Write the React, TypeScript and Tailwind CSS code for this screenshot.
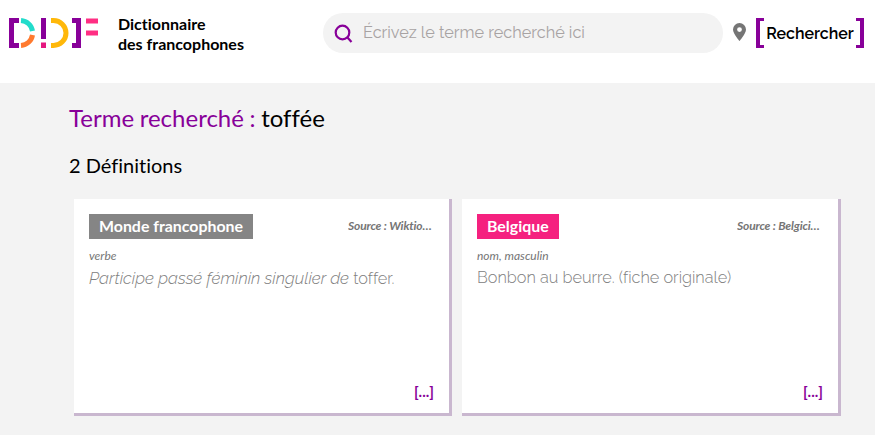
function Logo() {
  return (
    <svg width="90" height="32" viewBox="0 0 90 32" fill="none">
      <path d="M10 3.5H2.5V28.5H10" stroke="#880099" strokeWidth="5" />
      <path d="M12 3.5a12.5 12.5 0 0 1 11.5 10.5" stroke="#22dccb" strokeWidth="5" />
      <path d="M23.5 18a12.5 12.5 0 0 1-11.5 10.5" stroke="#ff7a2f" strokeWidth="5" />
      <rect x="32" y="1" width="5" height="21" fill="#880099" />
      <rect x="32" y="25.5" width="5" height="5.5" fill="#e5177f" />
      <path d="M42 3.5h2.5a12.5 12.5 0 0 1 0 25h-2.5" stroke="#ffb80a" strokeWidth="5" />
      <path d="M63 3.5H69.5V28.5H63" stroke="#880099" strokeWidth="5" />
      <path d="M77 4H89M77 16H89" stroke="#ff2e83" strokeWidth="5" />
    </svg>
  )
}

function Card({ badge, badgeColor, source, children, pos, width }: { badge: string; badgeColor: string; source: string; pos: string; width: string; children: React.ReactNode }) {
  return (
    <div className={`${width} h-[217px] bg-white border-r-[3px] border-b-[3px] border-[#c9b7cf] px-[15px] pt-[15px] flex flex-col`}>
      <div className="flex items-center justify-between">
        <span className={`${badgeColor} text-white font-bold text-[15.9px] leading-[23px] h-[25px] px-[10px]`}>{badge}</span>
        <span className="text-[#757575] italic font-bold text-[12px] tracking-[-0.15px] leading-[14px] mb-[1px] mr-[1px] w-[85px] truncate">{source}</span>
      </div>
      <div className="text-[#757575] italic text-[12px] leading-[14px] mt-[10px]">{pos}</div>
      <p className="font-['Raleway','Open_Sans',sans-serif] text-[#808080] text-[16.3px] leading-[22px] mt-[4px] font-light">{children}</p>
      <div className="mt-auto mb-[13px] text-right text-[#880099] font-bold text-[15px] leading-[18px]">[...]</div>
    </div>
  )
}

export default function App() {
  return (
    <div className="w-[875px] h-[435px] overflow-hidden bg-[#f3f3f3] font-['Lato',sans-serif] [font-variant-ligatures:none]">
      <header className="h-[83px] bg-white flex items-start pl-[9px]">
        <div className="mt-[17px] w-[90px]"><Logo /></div>
        <div className="ml-[19px] mt-[14px] text-black font-bold text-[16px] leading-[20px] w-[126px] whitespace-nowrap">
          Dictionnaire<br />des francophones
        </div>
        <div className="ml-[79px] mt-[13px] w-[400px] h-[40px] rounded-full bg-[#f3f3f3] flex items-center pl-[11px] gap-[10px]">
          <svg width="19" height="19" viewBox="0 0 19 19" fill="none" stroke="#880099" strokeWidth="2.2">
            <circle cx="8.5" cy="8.5" r="6.8" />
            <path d="M13.5 13.5L17.5 18" />
          </svg>
          <span className="font-['Raleway','Open_Sans',sans-serif] text-[#a8a3a3] text-[16.3px]">Écrivez le terme recherché ici</span>
        </div>
        <svg className="ml-[10px] mt-[23px]" width="13" height="18" viewBox="0 0 13 18">
          <path fillRule="evenodd" fill="#757575" d="M6.5 0A6.5 6.5 0 0 0 0 6.5C0 10.5 6.5 18 6.5 18S13 10.5 13 6.5A6.5 6.5 0 0 0 6.5 0ZM6.5 4.2a2.4 2.4 0 1 1 0 4.8 2.4 2.4 0 0 1 0-4.8Z" />
        </svg>
        <div className="ml-[10px] mt-[18px] h-[30px] w-[108px] pt-[1px] flex items-center justify-center relative font-['Raleway','Open_Sans',sans-serif] text-black font-semibold text-[16px] whitespace-nowrap">
          <span className="absolute left-0 inset-y-0 w-[8px] border-l-[4px] border-y-[3px] border-[#880099]" />
          <span className="absolute right-0 inset-y-0 w-[8px] border-r-[4px] border-y-[3px] border-[#880099]" />
          Rechercher
        </div>
      </header>
      <main className="pl-[69px]">
        <h1 className="mt-[19px] text-[24px] leading-[32px] text-[#880099] [word-spacing:-0.5px]">
          Terme recherché : <span className="text-black">toffée</span>
        </h1>
        <h2 className="mt-[18px] text-[20px] leading-[26px] text-black">2 Définitions</h2>
        <div className="flex gap-[10px] mt-[21px] ml-[5px]">
          <Card width="w-[378px]" badge="Monde francophone" badgeColor="bg-[#858585]" source="Source : Wiktionnaire" pos="verbe">
            <i className="text-[16.8px]">Participe passé féminin singulier de</i> toffer.
          </Card>
          <Card width="w-[379px]" badge="Belgique" badgeColor="bg-[#f5217f]" source="Source : Belgicismes" pos="nom, masculin">
            Bonbon au beurre. (fiche originale)
          </Card>
        </div>
      </main>
    </div>
  )
}
